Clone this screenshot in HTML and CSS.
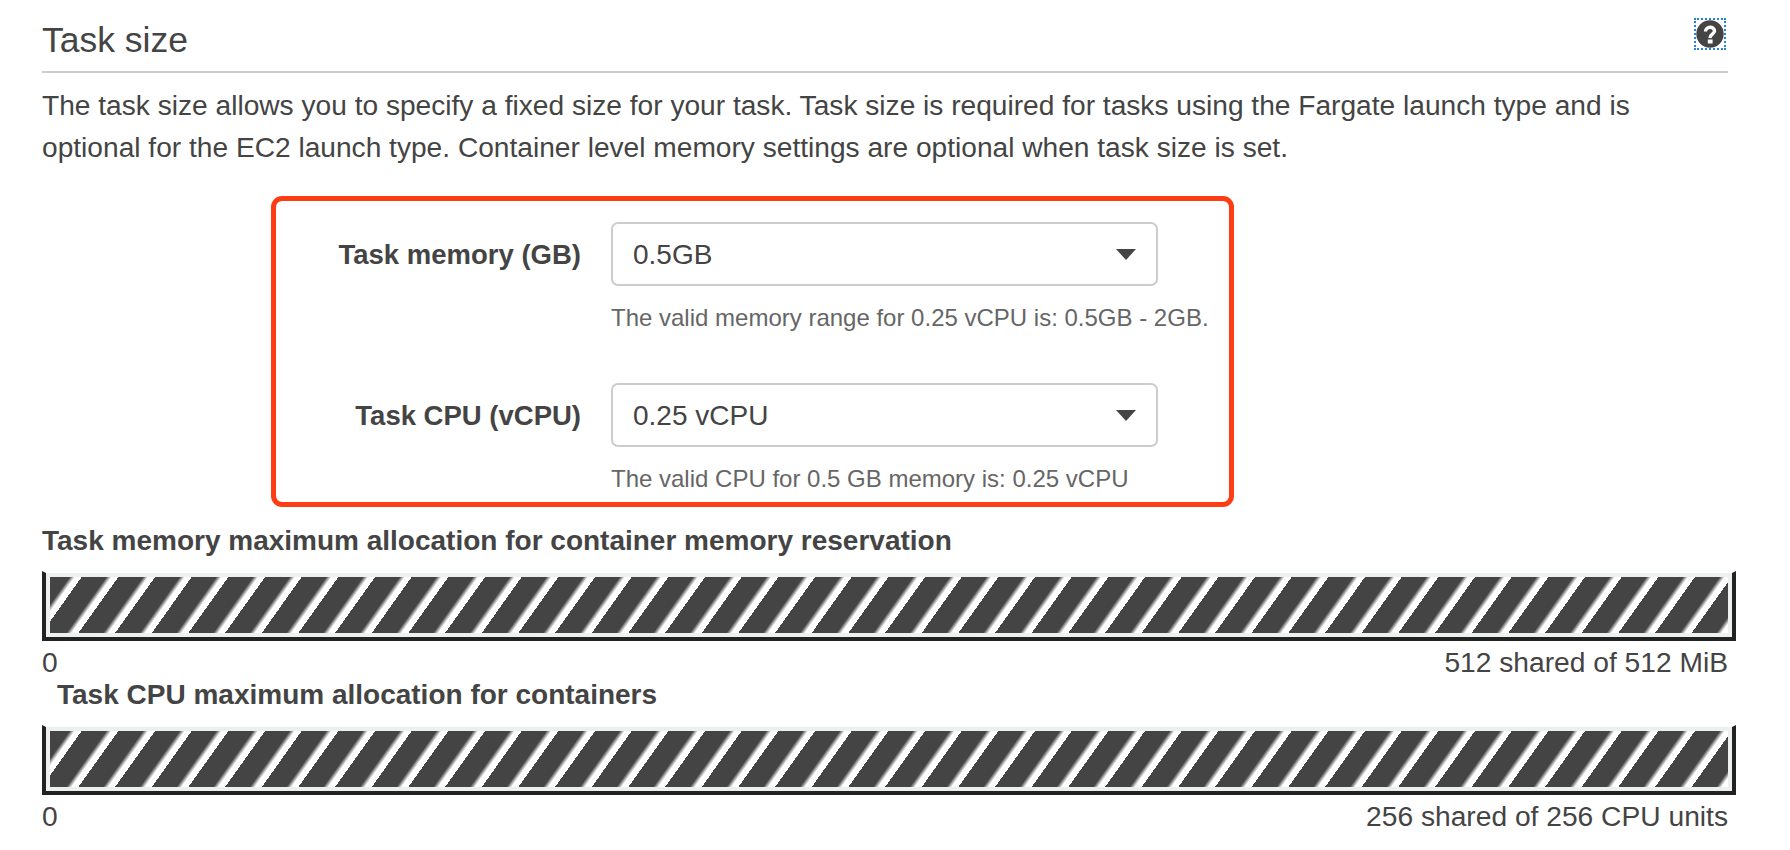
FILE: index.html
```html
<!DOCTYPE html>
<html lang="en">
<head>
  <meta charset="UTF-8" />
  <title>Task size</title>
  <link rel="stylesheet" href="styles.css">
</head>
<body>

<section class="task-size">
  <div class="section-head">
    <h2>Task size</h2>
    <a class="help-link" href="#" aria-label="Help">
      <svg viewBox="0 0 28 28">
        <circle cx="14" cy="14" r="13.700" fill="#444"/>
        <path d="M9.500 11.500c0-2.600 2-4.200 4.600-4.200 2.600 0 4.400 1.500 4.400 3.700 0 3.300-4.500 3.100-4.500 6.900" fill="none" stroke="#fff" stroke-width="3.400"/>
        <rect x="11.800" y="19.500" width="4.800" height="4" fill="#fff"/>
      </svg>
    </a>
  </div>
  <p class="intro">The task size allows you to specify a fixed size for your task. Task size is required for tasks using the Fargate launch type and is<br>optional for the EC2 launch type. Container level memory settings are optional when task size is set.</p>

  <div class="highlight">
    <div class="field">
      <label class="field-label">Task memory (GB)</label>
      <div class="field-body">
        <div class="select-box">
          <span>0.5GB</span>
          <i class="caret"></i>
        </div>
        <div class="hint">The valid memory range for 0.25 vCPU is: 0.5GB - 2GB.</div>
      </div>
    </div>
    <div class="field">
      <label class="field-label">Task CPU (vCPU)</label>
      <div class="field-body">
        <div class="select-box">
          <span>0.25 vCPU</span>
          <i class="caret"></i>
        </div>
        <div class="hint">The valid CPU for 0.5 GB memory is: 0.25 vCPU</div>
      </div>
    </div>
  </div>

  <div class="alloc">
    <div class="alloc-title">Task memory maximum allocation for container memory reservation</div>
    <div class="bar"><div class="stripes"></div></div>
    <div class="alloc-scale"><span>0</span><span>512 shared of 512 MiB</span></div>
  </div>
  <div class="alloc alloc-cpu">
    <div class="alloc-title">Task CPU maximum allocation for containers</div>
    <div class="bar"><div class="stripes"></div></div>
    <div class="alloc-scale"><span>0</span><span>256 shared of 256 CPU units</span></div>
  </div>
</section>

</body>
</html>
```

FILE: styles.css
```css
body { margin: 0; background: #fff; color: #444; font-family: "Liberation Sans", Arial, sans-serif; font-size: 28px; }
.task-size { width: 1694px; margin-left: 42px; }

.section-head {
  width: 1686px; height: 71px; border-bottom: 2px solid #ccc;
  display: flex; justify-content: space-between; align-items: flex-start;
}
.section-head h2 { margin: 22px 0 0; font-size: 35.500px; line-height: 36px; font-weight: normal; }
.help-link { margin: 18px 2px 0 0; border: 2px dotted #2a7de1; display: block; height: 28px; }
.help-link svg { display: block; width: 28px; height: 28px; }

.intro { margin: 0; padding-top: 12px; line-height: 42px; height: 83px; font-size: 28.140px; }

.highlight {
  box-sizing: border-box; width: 963px; height: 311px; margin: 28px 0 0 229px;
  border: 5px solid #ff3d14; border-radius: 11px; padding-top: 21px;
}
.field { display: flex; height: 161px; }
.field-label { width: 305px; padding-top: 15px; text-align: right; font-size: 27.500px; font-weight: bold; line-height: 36px; }
.field-body { margin-left: 30px; }
.select-box {
  box-sizing: border-box; width: 547px; height: 64px; padding: 1px 20px 0 20px;
  border: 2px solid #ccc; border-radius: 7px;
  display: flex; align-items: center; justify-content: space-between;
}
.caret { width: 0; height: 0; border: 10px solid transparent; border-top: 11px solid #444; border-bottom: 0; }
.hint { margin-top: 17px; font-size: 24px; line-height: 30px; color: #666; white-space: nowrap; }

.alloc { margin-top: 17px; }
.alloc-title { font-weight: bold; line-height: 34px; }
.bar {
  box-sizing: border-box; height: 70px; margin-top: 13px;
  border: 4px solid #222; border-top: 2px solid transparent;
}
.stripes {
  height: 100%; box-sizing: border-box; border: 4px solid #ecf0f0;
  background: repeating-linear-gradient(125.500deg, #444 0, #444 16px, #fff 20.300px, #fff 25.800px, #444 25.800px, #444 29.850px);
}
.alloc-scale { display: flex; justify-content: space-between; padding-right: 8px; line-height: 34px; margin-top: 4px; font-size: 28.200px; }
.alloc-cpu { margin-top: -1px; }
.alloc-cpu .alloc-title { padding-left: 15px; }
```
